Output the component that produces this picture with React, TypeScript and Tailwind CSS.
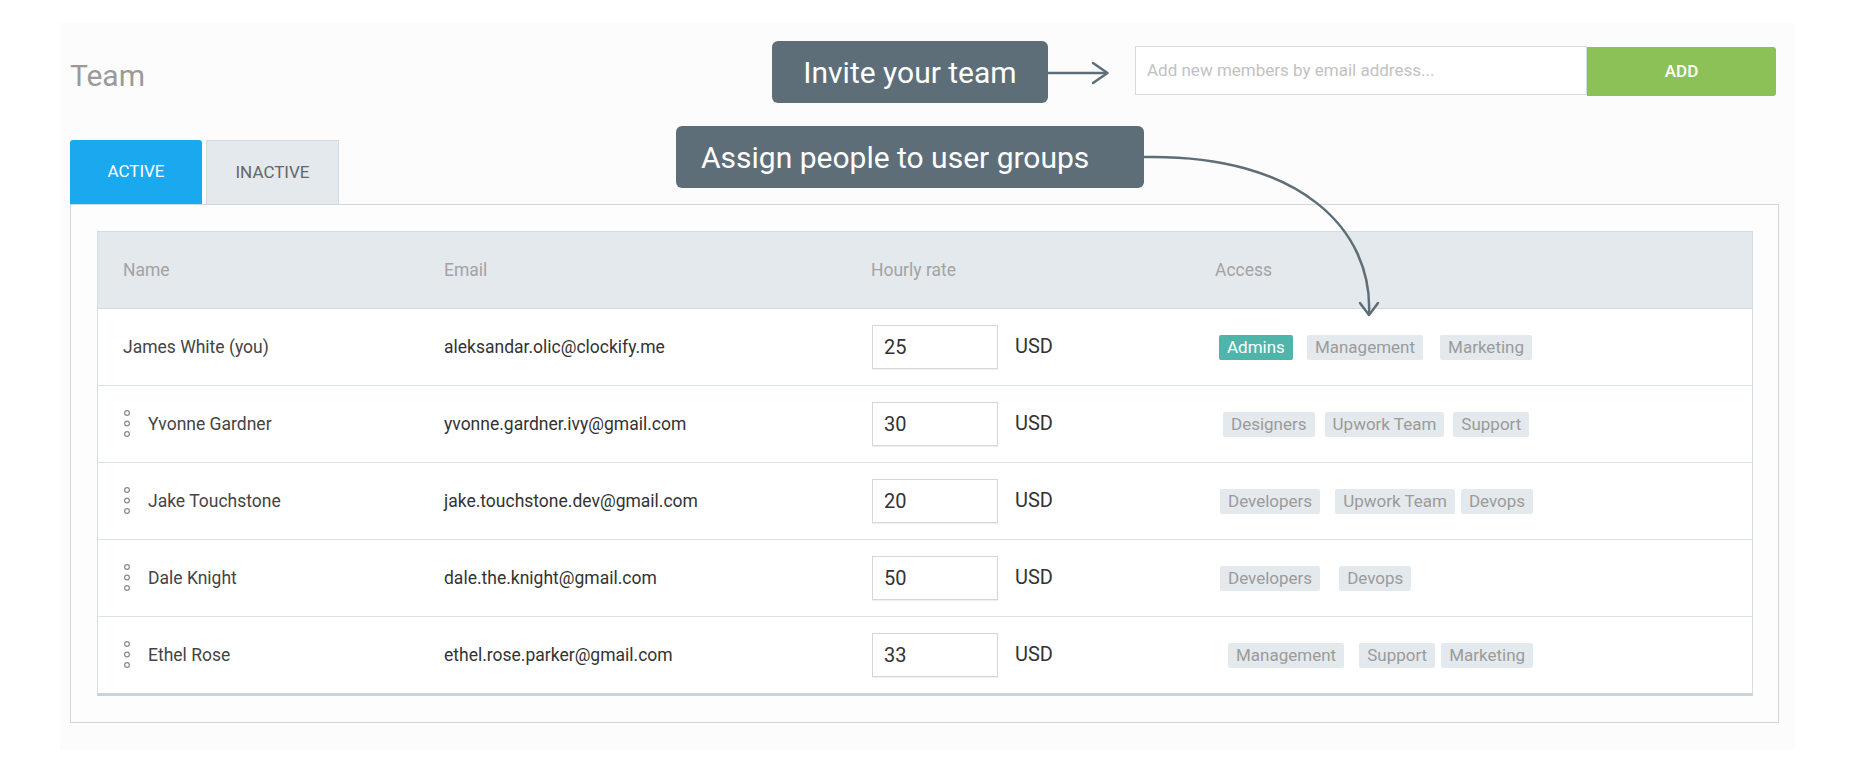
import React from "react";

interface Member {
  name: string;
  email: string;
  rate: string;
  owner?: boolean;
  // [label, left gap in px]
  groups: [string, number][];
}

const members: Member[] = [
  {
    name: "James White (you)",
    email: "aleksandar.olic@clockify.me",
    rate: "25",
    owner: true,
    groups: [
      ["Admins", 4],
      ["Management", 14],
      ["Marketing", 17],
    ],
  },
  {
    name: "Yvonne Gardner",
    email: "yvonne.gardner.ivy@gmail.com",
    rate: "30",
    groups: [
      ["Designers", 8],
      ["Upwork Team", 10],
      ["Support", 9],
    ],
  },
  {
    name: "Jake Touchstone",
    email: "jake.touchstone.dev@gmail.com",
    rate: "20",
    groups: [
      ["Developers", 5],
      ["Upwork Team", 15],
      ["Devops", 6],
    ],
  },
  {
    name: "Dale Knight",
    email: "dale.the.knight@gmail.com",
    rate: "50",
    groups: [
      ["Developers", 5],
      ["Devops", 19],
    ],
  },
  {
    name: "Ethel Rose",
    email: "ethel.rose.parker@gmail.com",
    rate: "33",
    groups: [
      ["Management", 13],
      ["Support", 15],
      ["Marketing", 6],
    ],
  },
];

const DragHandle: React.FC = () => (
  <svg width="10" height="30" viewBox="0 0 10 30" className="shrink-0">
    <circle cx="4" cy="4" r="2.4" fill="none" stroke="#8a8a8a" strokeWidth="1.2" />
    <circle cx="4" cy="14.5" r="2.4" fill="none" stroke="#8a8a8a" strokeWidth="1.2" />
    <circle cx="4" cy="25" r="2.4" fill="none" stroke="#8a8a8a" strokeWidth="1.2" />
  </svg>
);

const Tag: React.FC<{ label: string; gap: number }> = ({ label, gap }) => {
  const admin = label === "Admins";
  return (
    <span
      style={{ marginLeft: gap }}
      className={
        admin
          ? "h-[25px] px-[8px] text-[17px] leading-[25px] rounded-[2px] bg-[#4fb5aa] text-white"
          : "h-[25px] px-[8px] text-[17px] leading-[25px] rounded-[2px] bg-[#e4e9ed] text-[#9b9b9b]"
      }
    >
      {label}
    </span>
  );
};

const App: React.FC = () => {
  return (
    <div className="w-full h-[773px] bg-white pt-[23px] pl-[60px] font-['Roboto',sans-serif]">
      {/* Page panel */}
      <div className="relative w-[1735px] h-[727px] bg-[#fcfcfc] pl-[10px]">
        {/* Header */}
        <div className="flex items-start justify-between h-[117px] pr-[19px]">
          <h1 className="mt-[35px] text-[30px] leading-[36px] text-[#9a9a9a] font-normal">Team</h1>

          <div className="flex items-start">
            <div className="mt-[18px] w-[276px] h-[62px] rounded-[6px] bg-[#5e6e79] flex items-center justify-center text-white text-[30px]">
              Invite your team
            </div>
            <svg width="62" height="62" viewBox="0 0 62 62" className="mt-[18px]">
              <path d="M0 32 H59" stroke="#5e6e79" strokeWidth="2.5" fill="none" />
              <path d="M45 22 L59.5 32 L45 42" stroke="#5e6e79" strokeWidth="2.5" fill="none" strokeLinecap="round" strokeLinejoin="round" />
            </svg>
            <div className="ml-[25px] mt-[23px] w-[452px] h-[49px] bg-white border border-[#d9d9d9] flex items-center pl-[11px] text-[17px] text-[#c2c2c2]">
              Add new members by email address...
            </div>
            <button className="mt-[24px] w-[189px] h-[49px] rounded-r-[3px] bg-[#8bc157] text-white text-[17px] font-medium">
              ADD
            </button>
          </div>
        </div>

        {/* Tabs */}
        <div className="flex gap-[4px] h-[64px]">
          <div className="w-[132px] h-full rounded-t-[3px] bg-[#1aa9ef] text-white text-[17px] flex items-center justify-center">
            ACTIVE
          </div>
          <div className="w-[133px] h-full border border-b-0 border-[#d3dbe1] bg-[#e4e9ed] text-[#666] text-[17px] flex items-center justify-center">
            INACTIVE
          </div>
        </div>

        {/* Tab content */}
        <div className="w-[1709px] h-[519px] border border-[#cbd8e1] bg-[#fdfdfd] pt-[26px] pl-[26px]">
          <div className="w-[1656px] bg-white border-x border-t border-[#d3dde4] border-b-[3px] border-b-[#c9d3da] text-[17.5px]">
            <div className="flex items-center h-[77px] bg-[#e4e9ed] border-b border-[#d0dae1] text-[#a3a3a3]">
              <div className="w-[321px] pl-[25px]">Name</div>
              <div className="w-[427px] pl-[25px]">Email</div>
              <div className="w-[344px] pl-[25px]">Hourly rate</div>
              <div className="flex-1 pl-[25px]">Access</div>
            </div>
            {members.map((m, i) => (
              <div
                key={m.email}
                className={
                  i < members.length - 1
                    ? "flex items-center h-[77px] border-b border-[#d9e1e7]"
                    : "flex items-center h-[76px]"
                }
              >
                <div className="w-[321px] pl-[25px] flex items-center text-[#444]">
                  {m.owner ? (
                    <span>{m.name}</span>
                  ) : (
                    <>
                      <DragHandle />
                      <span className="ml-[15px]">{m.name}</span>
                    </>
                  )}
                </div>
                <div className="w-[427px] pl-[25px] text-[#333]">{m.email}</div>
                <div className="w-[344px] pl-[26px] flex items-center">
                  <div className="w-[126px] h-[44px] bg-white border border-[#d6d6d6] shadow-[0_1px_1px_rgba(0,0,0,0.06)] flex items-center pl-[11px] text-[20px] text-[#333]">
                    {m.rate}
                  </div>
                  <span className="ml-[17px] text-[20px] text-[#333] -mt-[3px]">USD</span>
                </div>
                <div className="flex-1 pl-[25px] flex items-center">
                  {m.groups.map(([g, gap]) => (
                    <Tag key={g} label={g} gap={gap} />
                  ))}
                </div>
              </div>
            ))}
          </div>
        </div>

        {/* Annotation: user groups */}
        <div className="absolute left-[616px] top-[103px] w-[468px] h-[62px] rounded-[6px] bg-[#5e6e79] flex items-center pl-[25px] text-white text-[30px]">
          Assign people to user groups
        </div>
        <svg
          width="250"
          height="195"
          viewBox="0 0 250 195"
          className="absolute left-[1080px] top-[127px]"
        >
          <path d="M4 7 C160 4 233 80 229 164" stroke="#5e6e79" strokeWidth="2.5" fill="none" />
          <path d="M220 153 L229 165 L238 153" stroke="#5e6e79" strokeWidth="2.5" fill="none" strokeLinecap="round" strokeLinejoin="round" />
        </svg>
      </div>
    </div>
  );
};

export default App;
